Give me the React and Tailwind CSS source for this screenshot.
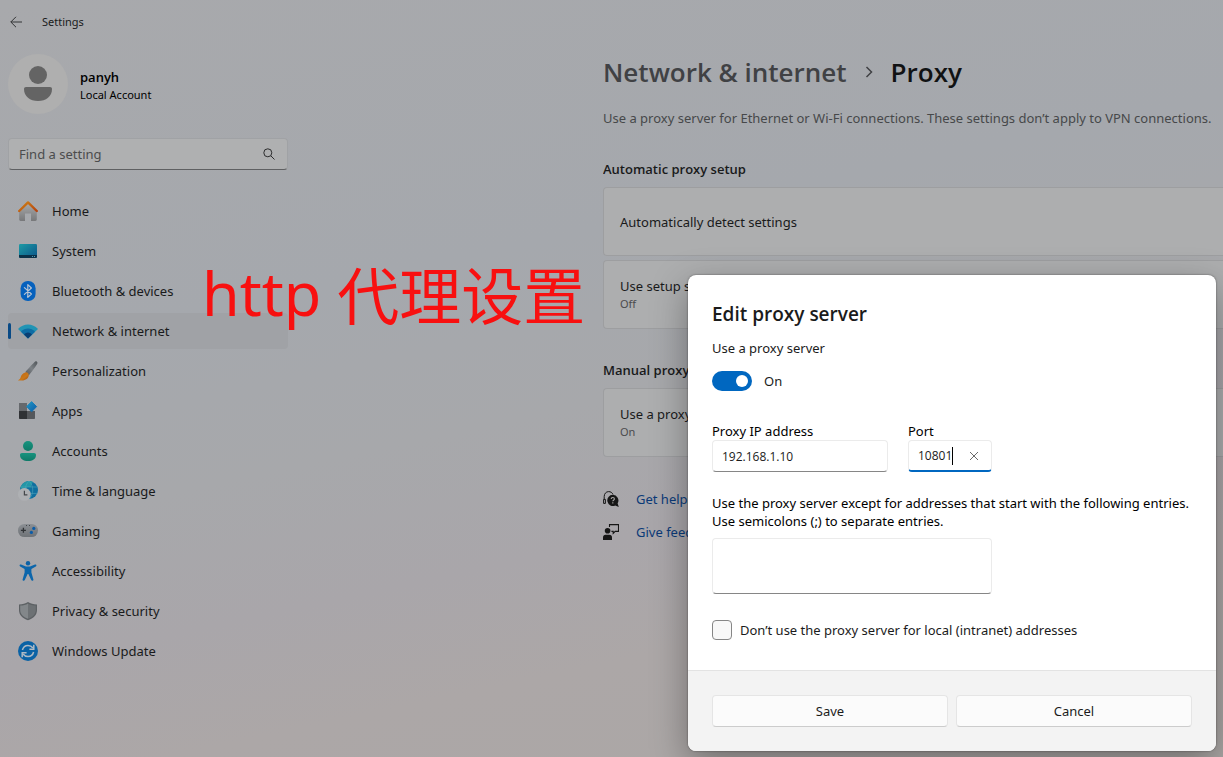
import React, { useState } from "react";

function HomeIcon() {
  return (
    <svg viewBox="0 0 20 20" className="size-5">
      <defs>
        <linearGradient id="homeWall" x1="0" y1="0" x2="0" y2="1">
          <stop offset="0" stopColor="#a9aaab" />
          <stop offset="1" stopColor="#77787a" />
        </linearGradient>
        <linearGradient id="homeRoof" x1="0" y1="0" x2="1" y2="1">
          <stop offset="0" stopColor="#cf8216" />
          <stop offset="1" stopColor="#b5420f" />
        </linearGradient>
      </defs>
      <path
        d="M10 2.2 1.2 10v8.6c0 .8.6 1.4 1.4 1.4H7v-7.600h6V20h4.400c.8 0 1.400-.6 1.400-1.400V10z"
        fill="url(#homeWall)"
      />
      <path
        d="M1.200 10 10 1.400l8.800 8.600"
        fill="none"
        stroke="url(#homeRoof)"
        strokeWidth="2.400"
        strokeLinecap="round"
        strokeLinejoin="round"
      />
    </svg>
  );
}

function SystemIcon() {
  return (
    <svg viewBox="0 0 20 20" className="size-5">
      <defs>
        <linearGradient id="sysScreen" x1="0" y1="0" x2="1" y2="1">
          <stop offset="0" stopColor="#1d9ba5" />
          <stop offset="1" stopColor="#0b5489" />
        </linearGradient>
      </defs>
      <rect x="1" y="3" width="18" height="14" rx="1.200" fill="url(#sysScreen)" />
      <path d="M1 14h18v1.800c0 .7-.5 1.200-1.200 1.200H2.200C1.500 17 1 16.500 1 15.800z" fill="#0b3048" />
      <path d="M14 15h1v1h-1zM16 15h1v1h-1z" fill="#4f9cb5" />
    </svg>
  );
}

function BluetoothIcon() {
  return (
    <svg viewBox="0 0 20 20" className="size-5">
      <rect x="2.600" y="0" width="15" height="20" rx="7.200" fill="#0661bd" />
      <path
        d="m6.400 6.600 7 6.400-3.600 3.400V3.600l3.600 3.400-7 6.400"
        fill="none"
        stroke="#b9c4d2"
        strokeWidth="1.200"
        strokeLinejoin="round"
        strokeLinecap="round"
      />
    </svg>
  );
}

function WifiIcon() {
  return (
    <svg viewBox="0 0 20 20" className="size-5">
      <path d="M0 8C5.400 2 14.600 2 20 8L10 17.400z" fill="#2194b4" />
      <path d="M3 10.800c3.800-4.400 10.200-4.400 14 0l-7 6.600z" fill="#0f6ca4" />
      <path d="M6 13.600c2.200-2.700 5.800-2.700 8 0l-4 3.900z" fill="#0a3f73" />
    </svg>
  );
}

function BrushIcon() {
  return (
    <svg viewBox="0 0 20 20" className="size-5">
      <defs>
        <linearGradient id="brushHandle" x1="1" y1="0" x2="0" y2="1">
          <stop offset="0" stopColor="#505559" />
          <stop offset=".5" stopColor="#7b8085" />
          <stop offset="1" stopColor="#55585c" />
        </linearGradient>
        <linearGradient id="brushTip" x1="0" y1="0" x2="1" y2="1">
          <stop offset="0" stopColor="#c06010" />
          <stop offset=".6" stopColor="#c9791b" />
          <stop offset="1" stopColor="#a84b0c" />
        </linearGradient>
      </defs>
      <path d="M17.200.6c.8-.8 2.600.3 2.200 1.600-.4 1.600-6.600 10-8.600 12.200L7.400 11C9.600 8.400 15.400 2.200 17.200.6z" fill="url(#brushHandle)" />
      <path d="M7.200 11.400c2-.8 4.200 1.400 3.400 3.800C9.600 18.800 4.600 20.200.2 19.400c-.3-.5 1.800-.9 2.400-3 .6-2.400 2-4.200 4.600-5z" fill="url(#brushTip)" />
    </svg>
  );
}

function AppsIcon() {
  return (
    <svg viewBox="0 0 20 20" className="size-5">
      <defs>
        <linearGradient id="appTile" x1="0" y1="0" x2="1" y2="1">
          <stop offset="0" stopColor="#2397c4" />
          <stop offset="1" stopColor="#0b5ca8" />
        </linearGradient>
      </defs>
      <path d="M1 2h8v8H1z" fill="#66696d" />
      <path d="M1 10h8v8H2c-.6 0-1-.4-1-1z" fill="#303235" />
      <path d="M9 10h8v7c0 .6-.4 1-1 1H9z" fill="#55585c" />
      <path d="m13.600.6 5 5-5 5.200-5-5.200z" fill="url(#appTile)" stroke="url(#appTile)" strokeLinejoin="round" />
    </svg>
  );
}

function AccountsIcon() {
  return (
    <svg viewBox="0 0 20 20" className="size-5">
      <defs>
        <linearGradient id="person" x1="0" y1="0" x2="0" y2="1">
          <stop offset="0" stopColor="#18937f" />
          <stop offset="1" stopColor="#0f7a68" />
        </linearGradient>
      </defs>
      <circle cx="10" cy="5" r="5" fill="url(#person)" />
      <path d="M4 12h12c1.200 0 2 .8 2 2 0 4-3.600 6-8 6s-8-2-8-6c0-1.200.8-2 2-2z" fill="url(#person)" />
    </svg>
  );
}

function TimeIcon() {
  return (
    <svg viewBox="0 0 20 20" className="size-5">
      <circle cx="11" cy="9" r="9" fill="#0f6f9f" />
      <path d="M2.400 7c2-6 8-8.400 12.600-6-1 2-2 3-2 5H9c0 2-1 3-3 3z" fill="#2397a6" />
      <path
        d="M3 6h16.400M3 12.400h16.400M11 0c-5 5-5 13 0 18 5-5 5-13 0-18"
        fill="none"
        stroke="#4fa5b8"
        strokeWidth=".6"
      />
      <circle cx="6.400" cy="13.400" r="6.400" fill="#aeb0b3" />
      <path d="M6.400 9.800v4h3" fill="none" stroke="#44474a" strokeWidth="1.200" />
    </svg>
  );
}

function GamingIcon() {
  return (
    <svg viewBox="0 0 20 20" className="size-5">
      <defs>
        <linearGradient id="pad" x1="0" y1="0" x2="0" y2="1">
          <stop offset="0" stopColor="#8b8f94" />
          <stop offset="1" stopColor="#6f7377" />
        </linearGradient>
      </defs>
      <rect x="0" y="3" width="20" height="13" rx="6.400" fill="url(#pad)" />
      <path d="M5.400 6.800v5M2.900 9.300h5" stroke="#303336" strokeWidth="1.300" />
      <circle cx="15.800" cy="7.400" r="1.600" fill="#0b5ca8" />
      <circle cx="13.400" cy="11.400" r="1.600" fill="#0b5ca8" />
      <path d="M8 4h1v1H8zM11 4h1v1h-1z" fill="#44474a" />
    </svg>
  );
}

function AccessibilityIcon() {
  return (
    <svg viewBox="0 0 20 20" className="size-5">
      <circle cx="10" cy="2.200" r="2.200" fill="#0c62a6" />
      <path
        d="M3 3.600 8 5.600h4l5-2c1.400-.4 2 1.400.8 2L13.400 8v3.600l2 6.800c.3 1.300-1.600 2-2.200.7L10.400 13h-.8l-2.800 6.100c-.6 1.300-2.500.6-2.200-.7l2-6.800V8L2.200 5.600c-1.200-.6-.6-2.400.8-2z"
        fill="#0c66ab"
      />
    </svg>
  );
}

function ShieldIcon() {
  return (
    <svg viewBox="0 0 20 20" className="size-5">
      <path d="M10 1c2.600 1.600 5.200 2.400 9 2.400V9c0 5-3.400 8.200-9 10.200C4.400 17.200 1 14 1 9V3.400c3.800 0 6.400-.8 9-2.400z" fill="#5d6164" />
      <path d="M10 2.400v15.400C5 15.800 2.200 13.200 2.200 9V4.600C5.400 4.500 7.800 3.800 10 2.400z" fill="#83878a" />
      <path d="M10 2.400v15.400c5-2 7.800-4.600 7.800-8.800V4.600c-3.200-.1-5.600-.8-7.800-2.200z" fill="#6d7174" />
    </svg>
  );
}

function UpdateIcon() {
  return (
    <svg viewBox="0 0 20 20" className="size-5">
      <circle cx="10" cy="10" r="10" fill="#0a62a5" />
      <path
        d="M4.400 9c.8-3 3-4.600 5.600-4.600 2 0 3.600.8 5 2.600M15.600 11c-.8 3-3 4.600-5.600 4.600-2 0-3.600-.8-5-2.600"
        fill="none"
        stroke="#afbac4"
        strokeWidth="1.500"
      />
      <path d="M15.800 3.800v4.400h-4.400M4.200 16.200v-4.400h4.400" fill="none" stroke="#afbac4" strokeWidth="1.500" />
    </svg>
  );
}

function HelpIcon() {
  return (
    <svg viewBox="0 0 16 16" className="size-4">
      <path d="M1.200 8.400V5.600C1.200 2.800 3 .6 5.600.6c2 0 3.600 1 4.400 2.800M.6 8.400h1.800v4H.6z" fill="none" stroke="#161616" />
      <path d="M9.800 3.800a5.600 5.600 0 1 0 2.400 10.700l3.600 1.500-1.200-3.700A5.600 5.600 0 0 0 9.800 3.800z" fill="#161616" />
      <path d="M8.200 8c0-2 3.200-2 3.200 0 0 1.200-1.600 1.200-1.600 2.200M9.800 11.200v1.200" fill="none" stroke="#aba8a8" strokeWidth="1.100" />
    </svg>
  );
}

function FeedbackIcon() {
  return (
    <svg viewBox="0 0 16 16" className="size-4">
      <circle cx="4.600" cy="6.800" r="2.800" fill="#161616" />
      <path d="M0 16v-2.600c0-1.600 1-2.600 2.600-2.600h3.800C8 10.800 9 11.800 9 13.400V16z" fill="#161616" />
      <path d="M6.500 3V.6h9v6.800h-3.300l-2 2V7.400H8.400" fill="none" stroke="#161616" strokeWidth="1.100" />
    </svg>
  );
}

const navItems = [
  { label: "Home", icon: HomeIcon },
  { label: "System", icon: SystemIcon },
  { label: "Bluetooth & devices", icon: BluetoothIcon },
  { label: "Network & internet", icon: WifiIcon, active: true },
  { label: "Personalization", icon: BrushIcon },
  { label: "Apps", icon: AppsIcon },
  { label: "Accounts", icon: AccountsIcon },
  { label: "Time & language", icon: TimeIcon },
  { label: "Gaming", icon: GamingIcon },
  { label: "Accessibility", icon: AccessibilityIcon },
  { label: "Privacy & security", icon: ShieldIcon },
  { label: "Windows Update", icon: UpdateIcon },
];

function Sidebar() {
  return (
    <aside className="w-[280px] shrink-0">
      {/* Account */}
      <div className="flex items-center gap-3 pt-[10px]">
        <div className="size-[60px] rounded-full bg-[#afafaf]">
          <svg viewBox="0 0 60 60" className="size-full" fill="#646464">
            <circle cx="30" cy="21" r="9" />
            <path d="M18 33h24c1.200 0 2 .8 2 2 0 7.500-6 12-14 12s-14-4.500-14-12c0-1.200.8-2 2-2z" />
          </svg>
        </div>
        <div className="pt-1 leading-[18px] text-black">
          <p className="font-['Open_Sans',sans-serif] font-semibold">panyh</p>
          <p className="text-[11px]">Local Account</p>
        </div>
      </div>

      {/* Search */}
      <div className="mt-6 flex h-8 items-center rounded border border-[#a0a2a5] border-b-[#5f6062] bg-[#afb0b1] px-[10px]">
        <input
          type="text"
          aria-label="Find a setting"
          placeholder="Find a setting"
          className="min-w-0 flex-1 bg-transparent outline-none placeholder:text-[#4b4c4d]"
        />
        <svg viewBox="0 0 12 12" className="mr-[2px] size-3" fill="none" stroke="#2c2c2d">
          <circle cx="4.800" cy="4.800" r="4" />
          <path d="m7.800 7.800 3.700 3.700" />
        </svg>
      </div>

      <nav className="mt-[23px] flex flex-col gap-1">
        {navItems.map(({ label, icon: Icon, active }) => (
          <a
            key={label}
            href="#"
            className={
              active
                ? "relative flex h-9 items-center gap-[14px] rounded bg-[#a0a2a6] pl-[10px]"
                : "relative flex h-9 items-center gap-[14px] rounded pl-[10px]"
            }
          >
            {active && <span className="absolute left-0 h-4 w-[3px] rounded-full bg-[#094a86]" />}
            <Icon />
            <span>{label}</span>
          </a>
        ))}
      </nav>
    </aside>
  );
}

function Card({ title, state }) {
  return (
    <div className="flex h-[69px] flex-col justify-center rounded-l border border-r-0 border-[#9d9ea0] bg-[#adaeaf] pl-4 leading-[18px]">
      <p>{title}</p>
      {state && <p className="text-[11px] text-[#4b4b4c]">{state}</p>}
    </div>
  );
}

function ProxyPage() {
  return (
    <main className="min-w-0 flex-1 overflow-hidden pt-[10px] whitespace-nowrap">
      <h1 className="flex items-center font-['Open_Sans',sans-serif] text-[26px] leading-9 font-semibold">
        <a href="#" className="text-[#404144]">
          Network &amp; internet
        </a>
        <svg viewBox="0 0 8 12" className="mx-[18px] h-3 w-2" fill="none" stroke="#404144" strokeWidth="1.500">
          <path d="m1.500 1 5 5-5 5" />
        </svg>
        <span className="text-[#111213]">Proxy</span>
      </h1>
      <p className="mt-[18px] text-[#47484a]">
        Use a proxy server for Ethernet or Wi-Fi connections. These settings don’t apply to VPN connections.
      </p>

      <h2 className="mt-[31px] font-['Open_Sans',sans-serif] font-semibold">Automatic proxy setup</h2>
      <div className="mt-2 flex flex-col gap-1">
        <Card title="Automatically detect settings" />
        <Card title="Use setup script" state="Off" />
      </div>

      <h2 className="mt-[31px] font-['Open_Sans',sans-serif] font-semibold">Manual proxy setup</h2>
      <div className="mt-2">
        <Card title="Use a proxy server" state="On" />
      </div>

      <div className="mt-8 flex flex-col gap-[13px] text-[#0b3a78]">
        <a href="#" className="flex items-center gap-[17px]">
          <HelpIcon />
          Get help
        </a>
        <a href="#" className="flex items-center gap-[17px]">
          <FeedbackIcon />
          Give feedback
        </a>
      </div>
    </main>
  );
}

function ProxyDialog() {
  const [enabled, setEnabled] = useState(true);
  const [address, setAddress] = useState("192.168.1.10");
  const [port, setPort] = useState("10801");
  const [skipLocal, setSkipLocal] = useState(false);

  return (
    <div
      role="dialog"
      aria-labelledby="dialog-title"
      className="w-[528px] overflow-hidden rounded-lg bg-white text-[#1b1b1b] shadow-[0_12px_36px_rgba(0,0,0,0.35),0_0_2px_rgba(0,0,0,0.5)]"
    >
      <div className="px-6 pt-6 pb-[30px] leading-[18px]">
        <h2 id="dialog-title" className="font-['Open_Sans',sans-serif] text-[19px] leading-[30px] font-semibold">
          Edit proxy server
        </h2>
        <label htmlFor="use-proxy" className="mt-[10px] block">
          Use a proxy server
        </label>
        <div className="mt-[14px] flex items-center gap-3">
          <input
            id="use-proxy"
            type="checkbox"
            role="switch"
            checked={enabled}
            onChange={(e) => setEnabled(e.target.checked)}
            className="relative h-5 w-10 appearance-none rounded-full bg-[#8a8a8a] before:absolute before:top-1 before:left-1 before:size-3 before:rounded-full before:bg-white checked:bg-[#0067c0] checked:before:left-6"
          />
          <span>{enabled ? "On" : "Off"}</span>
        </div>

        <div className="mt-[31px] flex gap-5">
          <div className="w-44">
            <label htmlFor="address" className="block text-black">
              Proxy IP address
            </label>
            <input
              id="address"
              type="text"
              value={address}
              onChange={(e) => setAddress(e.target.value)}
              className="block h-8 w-full rounded border border-[#ebebeb] border-b-[#868686] px-[9px] font-['Open_Sans',sans-serif] text-[12px] outline-none"
            />
          </div>
          <div className="w-[84px]">
            <label htmlFor="port" className="block text-black">
              Port
            </label>
            <div className="flex h-8 items-center rounded border border-b-2 border-[#ebebeb] border-b-[#0067c0] pl-[9px]">
              <input
                id="port"
                type="text"
                value={port}
                onChange={(e) => setPort(e.target.value)}
                className="field-sizing-content font-['Open_Sans',sans-serif] text-[12px] caret-transparent outline-none"
              />
              <span className="h-[18px] w-px shrink-0 bg-black" />
              <button type="button" aria-label="Clear port" onClick={() => setPort("")} className="ml-auto px-3">
                <svg viewBox="0 0 10 10" className="size-[10px]" stroke="#6b6b6b">
                  <path d="m1 1 8 8M9 1 1 9" />
                </svg>
              </button>
            </div>
          </div>
        </div>

        <label htmlFor="exceptions" className="mt-[22px] block text-black">
          Use the proxy server except for addresses that start with the following entries.
          <br />
          Use semicolons (;) to separate entries.
        </label>
        <textarea
          id="exceptions"
          className="mt-2 block h-14 w-[280px] resize-none rounded border border-[#ebebeb] border-b-[#868686] outline-none"
        />

        <label className="mt-[26px] flex items-center gap-2">
          <input
            type="checkbox"
            checked={skipLocal}
            onChange={(e) => setSkipLocal(e.target.checked)}
            className="size-5 appearance-none rounded border border-[#868686] bg-[#f8f8f8] checked:bg-[#0067c0]"
          />
          Don’t use the proxy server for local (intranet) addresses
        </label>
      </div>

      <div className="grid grid-cols-2 gap-2 border-t border-[#e3e3e3] bg-[#f3f3f3] p-6">
        <button type="button" className="h-8 rounded border border-[#e5e5e5] border-b-[#cccccc] bg-[#fbfbfb]">
          Save
        </button>
        <button type="button" className="h-8 rounded border border-[#e5e5e5] border-b-[#cccccc] bg-[#fbfbfb]">
          Cancel
        </button>
      </div>
    </div>
  );
}

export default function App() {
  return (
    <div className="relative min-h-screen overflow-hidden bg-[linear-gradient(168deg,#a8a9ac_0%,#a5a8ad_35%,#a7a8ab_52%,#a9a6aa_66%,#aca7a7_78%,#aba7a5_100%)] font-['Noto_Sans',sans-serif] text-[13px] leading-5 text-[#191a1b]">
      <header className="flex h-11 items-center gap-5 pl-[10px]">
        <button type="button" aria-label="Back">
          <svg viewBox="0 0 12 12" className="size-3" fill="none" stroke="#333436">
            <path d="M12 6H.8M6 .8.8 6 6 11.200" />
          </svg>
        </button>
        <span className="text-[11px]">Settings</span>
      </header>

      <div className="flex gap-[315px] pl-2">
        <Sidebar />
        <ProxyPage />
      </div>

      {/* Caption written over the window */}
      <p className="absolute top-[248px] left-[202px] flex items-end gap-4 leading-[90px] whitespace-nowrap text-[#f81010]">
        <span className="text-[61px]">http</span>
        <span className="font-['Noto_Sans_CJK_SC',sans-serif] text-[62px]">代理设置</span>
      </p>

      <div className="absolute right-[7px] bottom-[6px]">
        <ProxyDialog />
      </div>
    </div>
  );
}
